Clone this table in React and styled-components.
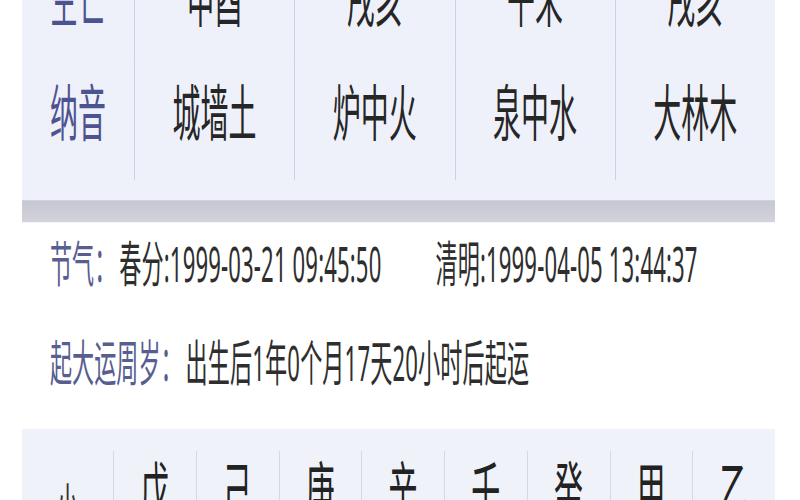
import React from 'react';
import styled, { createGlobalStyle } from 'styled-components';

const pillars = [
  { kong: '申酉', nayin: '城墙土' },
  { kong: '戌亥', nayin: '炉中火' },
  { kong: '午未', nayin: '泉中水' },
  { kong: '戌亥', nayin: '大林木' },
];

const dayun = ['戊', '己', '庚', '辛', '壬', '癸', '甲', '乙'];

function App() {
  return (
    <>
      <GlobalStyle />
      <Viewport>
        <Stage>
          <PillarCard>
            <PillarRow>
              <RowLabel>空亡</RowLabel>
              {pillars.map((p, i) => (
                <PillarCell key={i}>{p.kong}</PillarCell>
              ))}
            </PillarRow>
            <PillarRow $lift>
              <RowLabel>纳音</RowLabel>
              {pillars.map((p, i) => (
                <PillarCell key={i}>{p.nayin}</PillarCell>
              ))}
            </PillarRow>
          </PillarCard>
          <Band />

          <Info>
            <InfoLine>
              <InfoLabel>节气：</InfoLabel>
              <InfoValue>春分:1999-03-21 09:45:50</InfoValue>
              <InfoValue $gap>清明:1999-04-05 13:44:37</InfoValue>
            </InfoLine>
            <InfoLine>
              <InfoLabel>起大运周岁：</InfoLabel>
              <InfoValue>出生后1年0个月17天20小时后起运</InfoValue>
            </InfoLine>
          </Info>

          <DayunCard>
            <DayunLabel>
              <span>小</span>
              <span>运</span>
            </DayunLabel>
            {dayun.map((g) => (
              <DayunCell key={g}>{g}</DayunCell>
            ))}
          </DayunCard>
        </Stage>
      </Viewport>
    </>
  );
}

export default App;

const GlobalStyle = createGlobalStyle`
  html, body {
    margin: 0;
    padding: 0;
    background: #ffffff;
  }
  body {
    font-family: Roboto, "Noto Sans CJK SC", sans-serif;
  }
`;

const Viewport = styled.div`
  width: 800px;
  height: 500px;
  overflow: hidden;
`;

// the screenshot is stretched vertically, so the whole page is scaled
const Stage = styled.div`
  display: flow-root;
  width: 800px;
  transform: scaleY(2.2);
  transform-origin: 0 0;
`;

const PillarCard = styled.div`
  margin: -30.4px 0 0 22px;
  width: 753px;
  padding-bottom: 8.9px;
  background: #eff1fa;
`;

const Band = styled.div`
  margin-left: 22px;
  width: 753px;
  height: 10.4px;
  background: linear-gradient(#c7c7d3, #d3d3dd);
`;

const PillarRow = styled.div`
  display: grid;
  grid-template-columns: 112px repeat(4, 1fr);
  height: 56px;

  & > * {
    padding-bottom: ${(p) => (p.$lift ? '6.4px' : '0')};
  }
`;

const RowLabel = styled.div`
  display: flex;
  align-items: center;
  justify-content: center;
  font-size: 28px;
  color: #4d5390;
`;

const PillarCell = styled.div`
  display: flex;
  align-items: center;
  justify-content: center;
  border-left: 1px solid #cfd2de;
  font-size: 28px;
  color: #262626;
`;

const Info = styled.div`
  margin-left: 22px;
  padding: 3.4px 0 0 28px;
  display: flex;
  flex-direction: column;
  gap: 17.2px;
`;

const InfoLine = styled.div`
  display: flex;
  align-items: center;
  height: 28px;
  font-family: "Noto Sans", "Noto Sans CJK SC", sans-serif;
  font-size: 22.1px;
  white-space: nowrap;
`;

const InfoLabel = styled.span`
  color: #585e90;
`;

const InfoValue = styled.span`
  color: #2e2e2e;
  margin-left: ${(p) => (p.$gap ? '54px' : '3px')};
  letter-spacing: 0.15px;
`;

const DayunCard = styled.div`
  margin: 17.4px 0 0 22px;
  width: 753px;
  height: 40px;
  padding-top: 10.5px;
  display: grid;
  grid-template-columns: 91px repeat(8, 1fr);
  background: #f0f2fa;
`;

const DayunLabel = styled.div`
  display: flex;
  flex-direction: column;
  align-items: center;
  padding-top: 13px;
  font-size: 22px;
  line-height: 1.2;
  color: #333333;
`;

const DayunCell = styled.div`
  text-align: center;
  padding-top: 2px;
  border-left: 1px solid #d6d9e4;
  font-size: 29px;
  line-height: 1.2;
  color: #222222;
`;
